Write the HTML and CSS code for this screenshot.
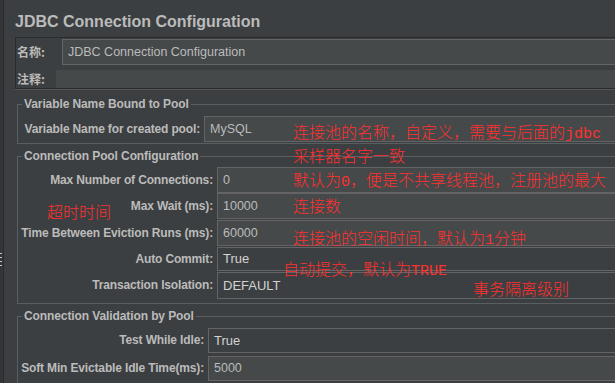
FILE: index.html
```html
<!DOCTYPE html>
<html lang="zh-CN">
<head>
    <meta charset="UTF-8">
    <meta name="viewport" content="width=device-width, initial-scale=1.0">
    <title>JDBC Connection Configuration</title>
    <link rel="stylesheet" href="styles.css">
</head>
<body>
    <div class="window">
        <div class="splitter"><span class="grip"></span></div>

        <div class="editor">
            <h1 class="title">JDBC Connection Configuration</h1>

            <!-- name / comment -->
            <div class="name-panel">
                <div class="name-row">
                    <label class="cn-label">名称:</label>
                    <div class="field">JDBC Connection Configuration</div>
                </div>
                <div class="comment-row">
                    <label class="cn-label">注释:</label>
                    <div class="comment"></div>
                </div>
            </div>

            <fieldset class="group group-var">
                <legend>Variable Name Bound to Pool</legend>
                <div class="form">
                    <span class="label">Variable Name for created pool:</span>
                    <div class="field">MySQL</div>
                </div>
            </fieldset>

            <fieldset class="group group-pool">
                <legend>Connection Pool Configuration</legend>
                <div class="form">
                    <span class="label">Max Number of Connections:</span>
                    <div class="field">0</div>
                    <span class="label">Max Wait (ms):</span>
                    <div class="field">10000</div>
                    <span class="label">Time Between Eviction Runs (ms):</span>
                    <div class="field">60000</div>
                    <span class="label short">Auto Commit:</span>
                    <div class="combo short">True</div>
                    <span class="label tall">Transaction Isolation:</span>
                    <div class="combo tall">DEFAULT</div>
                </div>
            </fieldset>

            <fieldset class="group group-valid">
                <legend>Connection Validation by Pool</legend>
                <div class="form">
                    <span class="label">Test While Idle:</span>
                    <div class="combo">True</div>
                    <span class="label">Soft Min Evictable Idle Time(ms):</span>
                    <div class="field">5000</div>
                </div>
            </fieldset>
        </div>

        <!-- red notes drawn over the form -->
        <div class="notes">
            <p class="note note-name">连接池的名称，自定义，需要与后面的<span class="latin">jdbc</span><br>采样器名字一致</p>
            <p class="note note-max">默认为<span class="latin">0</span>，便是不共享线程池，注册池的最大<br>连接数</p>
            <p class="note note-wait">超时时间</p>
            <p class="note note-evict">连接池的空闲时间，默认为<span class="latin">1</span>分钟</p>
            <p class="note note-commit">自动提交，默认为<span class="latin">TRUE</span></p>
            <p class="note note-iso">事务隔离级别</p>
        </div>
    </div>
</body>
</html>
```

FILE: styles.css
```css
* {
    box-sizing: border-box;
}

body {
    margin: 0;
    width: 615px;
    height: 383px;
    overflow: hidden;
    background: #3c3f41;
    color: #bbbbbb;
    font-family: "Liberation Sans", Arial, sans-serif;
    font-size: 12px;
}

.window {
    position: relative;
    display: flex;
    height: 100vh;
}

.splitter {
    flex-shrink: 0;
    width: 4px;
    background: #333537;
    border-right: 1px solid #2b2b2b;
}

.grip {
    display: block;
    width: 2px;
    height: 13px;
    margin-top: 253px;
    background: repeating-linear-gradient(to bottom, #c8c8c8 0 1px, transparent 1px 4px);
}

.editor {
    flex: 1;
    min-width: 0;
    margin-right: -60px; /* panels run past the right edge */
    padding-left: 11px;
}

.title {
    margin: 0;
    padding: 12px 0 5px;
    font-size: 16px;
    line-height: 20px;
    font-weight: bold;
    color: #bbbbbb;
}

/* name + comment box */
.name-panel {
    border: 1px solid #2b2b2b;
    box-shadow: 0 1px 0 #545657;
    padding: 1px 0 0 0;
}

.name-row {
    display: flex;
    height: 26px;
}

.comment-row {
    display: flex;
    height: 18px;
    margin-top: 5px;
}

.cn-label {
    flex-shrink: 0;
    padding-left: 1px;
    font-family: "Noto Sans CJK SC", sans-serif;
    font-weight: bold;
    font-size: 12px;
    line-height: 26px;
}

.name-row .cn-label {
    width: 46px;
}

.comment-row .cn-label {
    width: 40px;
    line-height: 18px;
}

.comment {
    flex: 1;
    background: #45494a;
}

/* inputs */
.field,
.combo {
    height: 26px;
    padding: 0 5px;
    border: 1px solid #646464;
    background: #45494a;
    font-size: 12.5px;
    line-height: 24px;
    color: #bbbbbb;
    white-space: nowrap;
}

.name-row .field {
    flex: 1;
}

.combo {
    background: #3c3f41;
    color: #d2d2d2;
    font-size: 13px;
}

/* titled groups */
.group {
    margin: 5px 0 0 2px;
    padding: 4px 0 4px 4px;
    border: 1px solid #5b5e60;
    min-width: 0;
}

.group legend {
    padding: 0 2px;
    font-weight: bold;
    font-size: 12px;
    line-height: 14px;
    letter-spacing: -0.1px;
}

.form {
    display: grid;
    column-gap: 4px;
    align-items: start;
}

.label {
    justify-self: end;
    font-weight: bold;
    line-height: 26px;
    letter-spacing: -0.15px;
    white-space: nowrap;
}

.group-var {
    margin-top: 8px;
    padding-top: 5px;
    padding-bottom: 1px;
}

.group-var .form {
    grid-template-columns: 178px 1fr;
}

.group-pool .form {
    grid-template-columns: 191px 1fr;
    grid-template-rows: 26px 27px 27px 25px 27px;
}

.group-pool .short {
    height: 24px;
    line-height: 24px;
}

.group-pool .combo.short {
    line-height: 22px;
}

.group-pool .tall {
    height: 27px;
    line-height: 27px;
}

.group-pool .combo.tall {
    line-height: 25px;
}

.group-valid {
    padding-top: 5px;
}

.group-valid .form {
    grid-template-columns: 182px 1fr;
    row-gap: 3px;
}

.group-valid .label {
    line-height: 25px;
}

.group-valid .field,
.group-valid .combo {
    height: 25px;
    line-height: 23px;
}

/* annotations */
.notes {
    position: absolute;
    inset: 0;
    pointer-events: none;
}

.note {
    position: absolute;
    margin: 0;
    font-family: "Noto Sans CJK SC", sans-serif;
    font-weight: 300;
    font-size: 16px;
    line-height: 20px;
    color: #ff3030;
    white-space: nowrap;
}

.latin {
    font-family: "Liberation Mono", monospace;
    font-size: 15px;
}

.note-name {
    left: 293px;
    top: 121px;
}

.note-max {
    left: 293px;
    top: 168px;
    line-height: 22px;
}

.note-wait {
    left: 47px;
    top: 201px;
}

.note-evict {
    left: 293px;
    top: 227px;
}

.note-commit {
    left: 283px;
    top: 258px;
}

.note-iso {
    left: 473px;
    top: 278px;
}
```
